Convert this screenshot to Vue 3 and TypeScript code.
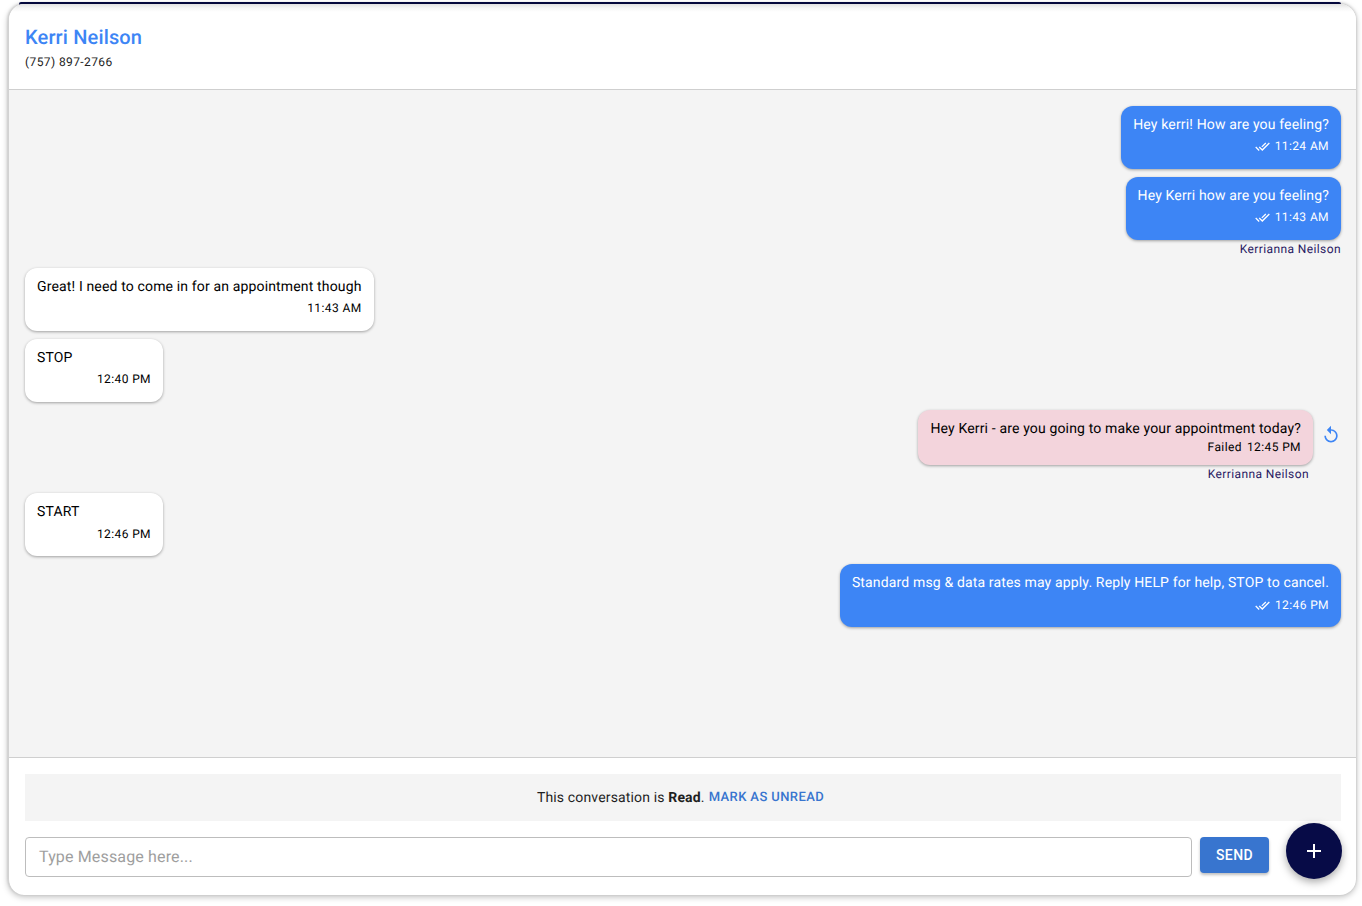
<script setup lang="ts">
interface Msg {
  id: number
  side: 'in' | 'out' | 'failed'
  text: string
  time: string
  sender?: string
  late?: boolean
}
const messages: Msg[] = [
  { id: 1, side: 'out', text: 'Hey kerri! How are you feeling?', time: '11:24 AM' },
  { id: 2, side: 'out', text: 'Hey Kerri how are you feeling?', time: '11:43 AM', sender: 'Kerrianna Neilson' },
  { id: 3, side: 'in', text: 'Great! I need to come in for an appointment though', time: '11:43 AM' },
  { id: 4, side: 'in', text: 'STOP', time: '12:40 PM' },
  { id: 5, side: 'failed', text: 'Hey Kerri - are you going to make your appointment today?', time: '12:45 PM', sender: 'Kerrianna Neilson' },
  { id: 6, side: 'in', text: 'START', time: '12:46 PM', late: true },
  { id: 7, side: 'out', text: 'Standard msg & data rates may apply. Reply HELP for help, STOP to cancel.', time: '12:46 PM', late: true },
]
</script>

<template>
  <div class="page">
    <div class="strip"></div>
    <main class="card">
      <header class="head">
        <h1 class="name">Kerri Neilson</h1>
        <p class="phone">(757) 897-2766</p>
      </header>
      <section class="thread">
        <div v-for="m in messages" :key="m.id" class="row" :class="'row-' + m.side">
          <div class="stack">
            <div class="bubble" :class="['b-' + m.side, { late: m.late }]">
              <div class="text">{{ m.text }}</div>
              <div class="meta">
                <svg v-if="m.side === 'out'" class="ticks" viewBox="0 0 24 24" width="15" height="15">
                  <path fill="#fff" d="M18 7l-1.41-1.41-6.34 6.34 1.41 1.41L18 7zm4.24-1.41L11.66 16.17 7.48 12l-1.41 1.41L11.66 19l12-12-1.42-1.41zM.41 13.41 6 19l1.41-1.41L1.83 12 .41 13.41z" />
                </svg>
                <span v-if="m.side === 'failed'" class="failed">Failed</span>
                <span>{{ m.time }}</span>
              </div>
            </div>
            <div v-if="m.sender" class="sender">{{ m.sender }}</div>
          </div>
          <svg v-if="m.side === 'failed'" class="retry" viewBox="0 0 24 24" width="20" height="20">
            <path fill="#3d85f5" d="M12 5V1L7 6l5 5V7c3.31 0 6 2.69 6 6s-2.69 6-6 6-6-2.69-6-6H4c0 4.42 3.58 8 8 8s8-3.58 8-8-3.58-8-8-8z" />
          </svg>
        </div>
      </section>
      <footer class="foot">
        <div class="notice">
          <span>This conversation is <b>Read</b>.</span>
          <a class="mark">MARK AS UNREAD</a>
        </div>
        <div class="composer">
          <div class="input">Type Message here...</div>
          <button class="send">SEND</button>
          <button class="fab" aria-label="Add">
            <svg viewBox="0 0 24 24" width="24" height="24">
              <path fill="#fff" d="M19 13h-6v6h-2v-6H5v-2h6V5h2v6h6v2z" />
            </svg>
          </button>
        </div>
      </footer>
    </main>
  </div>
</template>

<style>
html, body { background: #fff; }
</style>

<style scoped>
.page {
  position: relative;
  box-sizing: border-box;
  height: 906px;
  padding: 4px 6px 11px 8px;
  font-family: Roboto, "Liberation Sans", sans-serif;
  text-rendering: geometricPrecision;
  color: #000;
  overflow: hidden;
}
.strip {
  position: absolute;
  top: 2px;
  left: 19px;
  right: 21px;
  height: 3px;
  border-radius: 2px 2px 0 0;
  background: #070b47;
}
.card {
  position: relative;
  box-sizing: border-box;
  height: 100%;
  display: flex;
  flex-direction: column;
  background: #fff;
  border-radius: 16px;
  border-left: 1px solid #d2d2d2;
  box-shadow: 0 2px 6px rgba(0, 0, 0, .25), 0 -1px 3px rgba(0, 0, 0, .18);
  overflow: hidden;
}
.head {
  height: 86px;
  flex: none;
  box-sizing: border-box;
  padding: 20px 16px 0;
  border-bottom: 1px solid #cfcfcf;
  background: linear-gradient(#e2e2e2, #f6f6f6 4px, #fff 8px);
}
.name {
  margin: 0;
  font-size: 20px;
  line-height: 26px;
  font-weight: 500;
  color: #3d85f5;
  letter-spacing: .15px;
}
.phone {
  margin: 5px 0 0;
  font-size: 12px;
  line-height: 14px;
  letter-spacing: .4px;
  color: #222;
}
.thread {
  flex: 1;
  background: #f4f4f4;
  padding: 16px 15px 0 16px;
  display: flex;
  flex-direction: column;
  gap: 8px;
  min-height: 0;
}
.row { display: flex; align-items: flex-start; }
.row-out { justify-content: flex-end; }
.row-failed { justify-content: flex-end; }
.row-in { justify-content: flex-start; }
.stack { display: flex; flex-direction: column; align-items: flex-end; }
.bubble {
  box-sizing: border-box;
  height: 63px;
  padding: 9px 12px 0;
  border-radius: 12px;
  box-shadow: 0 1px 3px rgba(0, 0, 0, .35);
  font-size: 14px;
  line-height: 20px;
  letter-spacing: .15px;
}
.b-out { background: #3d85f5; color: #fff; }
.b-in { background: #fff; color: #000; min-width: 138px; }
.b-failed { background: #f3d4dc; color: #000; height: 55px; }
.meta {
  display: flex;
  justify-content: flex-end;
  align-items: center;
  gap: 5px;
  margin-top: 1px;
  font-size: 12px;
  line-height: 20px;
  letter-spacing: .4px;
}
.late .meta { margin-top: 2px; }
.b-failed .meta { margin-top: -2px; }
.ticks { display: block; margin-top: 1px; }
.sender {
  font-size: 12px;
  line-height: 14px;
  margin: 2px 0 4px;
  letter-spacing: .4px;
  color: #2a1a63;
}
.row-failed .sender { margin-right: 4px; }
.retry { margin: 15px 0 0 8px; flex: none; }
.foot {
  flex: none;
  height: 138px;
  box-sizing: border-box;
  padding: 16px 15px 0 16px;
  border-top: 1px solid #cfcfcf;
}
.notice {
  height: 47px;
  box-sizing: border-box;
  padding: 0 5px 0 0;
  background: #f4f4f4;
  display: flex;
  align-items: center;
  justify-content: center;
  gap: 4px;
  font-size: 14px;
  letter-spacing: .15px;
  color: #1f1f1f;
}
.mark {
  font-size: 13px;
  font-weight: 500;
  letter-spacing: .4px;
  color: #3875cf;
}
.composer {
  display: flex;
  align-items: center;
  gap: 8px;
  margin-top: 16px;
  padding-right: 72px;
  position: relative;
}
.input {
  flex: 1;
  box-sizing: border-box;
  height: 40px;
  line-height: 38px;
  padding: 0 13px;
  border: 1px solid #bdbdbd;
  border-radius: 4px;
  font-size: 16px;
  letter-spacing: .15px;
  color: #9e9e9e;
}
.send {
  width: 69px;
  height: 36px;
  margin-top: -4px;
  border: 0;
  border-radius: 4px;
  background: #3875cf;
  color: #fff;
  font: 500 14px Roboto, sans-serif;
  letter-spacing: .4px;
  box-shadow: 0 2px 3px rgba(0, 0, 0, .25);
}
.fab {
  position: absolute;
  right: -1px;
  top: -14px;
  width: 56px;
  height: 56px;
  border: 0;
  border-radius: 50%;
  background: #070b47;
  display: flex;
  align-items: center;
  justify-content: center;
  padding: 0;
  box-shadow: 0 3px 8px rgba(0, 0, 0, .35);
}
</style>
